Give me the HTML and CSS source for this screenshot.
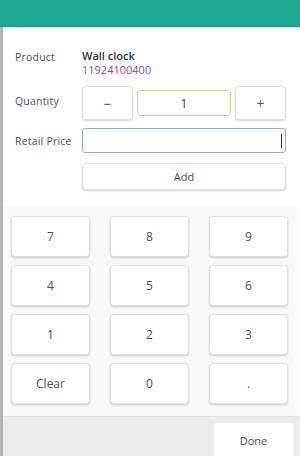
FILE: index.html
```html
<!DOCTYPE html>
<html>
<head>
<meta charset="utf-8">
<link rel="stylesheet" href="styles.css">
</head>
<body>
<div class="app">
  <header class="topbar"></header>
  <main class="main">
    <section class="form">
      <div class="row row-product">
        <div class="label">Product</div>
        <div class="value">
          <div class="name">Wall clock</div>
          <div class="code">11924100400</div>
        </div>
      </div>
      <div class="row row-qty">
        <div class="label label-qty">Quantity</div>
        <div class="qty">
          <button class="btn qbtn">&minus;</button>
          <div class="qinput">1</div>
          <button class="btn qbtn">+</button>
        </div>
      </div>
      <div class="row row-price">
        <div class="label">Retail Price</div>
        <div class="pinput"><span class="caret"></span></div>
      </div>
      <div class="row row-add">
        <div class="label"></div>
        <button class="btn addbtn">Add</button>
      </div>
    </section>
    <section class="keypad">
      <button class="btn key">7</button>
      <button class="btn key">8</button>
      <button class="btn key">9</button>
      <button class="btn key">4</button>
      <button class="btn key">5</button>
      <button class="btn key">6</button>
      <button class="btn key">1</button>
      <button class="btn key">2</button>
      <button class="btn key">3</button>
      <button class="btn key">Clear</button>
      <button class="btn key">0</button>
      <button class="btn key">.</button>
    </section>
    <footer class="footer">
      <button class="btn done">Done</button>
    </footer>
  </main>
</div>
</body>
</html>
```
FILE: styles.css
```css
html, body {
  margin: 0;
  padding: 0;
  background: #ffffff;
}
body {
  font-family: "Open Sans", "Noto Sans", sans-serif;
  color: #3d4450;
  width: 300px;
  height: 456px;
  overflow: hidden;
}
.app {
  display: flex;
  flex-direction: column;
  height: 456px;
}
.topbar {
  height: 26px;
  background: #21a892;
  border-bottom: 1px solid #1d9883;
  flex: none;
}
.main {
  flex: 1;
  display: flex;
  flex-direction: column;
  border-left: 3px solid #b4b4b4;
}
.form {
  padding: 22px 14px 17px 12px;
  display: flex;
  flex-direction: column;
}
.row {
  display: flex;
  align-items: center;
}
.label {
  width: 67px;
  flex: none;
  font-size: 10.5px;
  color: #4a4f57;
  letter-spacing: 0.2px;
}
.label-qty {
  margin-top: -4px;
}
.row-product {
  align-items: flex-start;
}
.row-product .label {
  padding-top: 1px;
}
.value {
  line-height: 14px;
}
.name {
  font-size: 11px;
  font-weight: 600;
  color: #2b3340;
}
.code {
  font-size: 11px;
  color: #9a3fb8;
}
.row-qty {
  margin-top: 9px;
  height: 34px;
}
.qty {
  flex: 1;
  display: flex;
  align-items: center;
  gap: 4px;
}
.btn {
  font-family: inherit;
  background: #ffffff;
  border: 1px solid #e0e0e0;
  border-radius: 4px;
  box-shadow: 0 1px 2px rgba(0, 0, 0, 0.18);
  color: #4a4f57;
  padding: 0;
  margin: 0;
}
.qbtn {
  width: 51px;
  height: 34px;
  font-size: 14px;
}
.qinput {
  flex: 1;
  height: 26px;
  box-sizing: border-box;
  border: 1px solid #c6d88c;
  border-radius: 4px;
  display: flex;
  align-items: center;
  justify-content: center;
  font-size: 12px;
  color: #3d4450;
}
.row-price {
  margin-top: 8px;
}
.pinput {
  flex: 1;
  height: 25px;
  box-sizing: border-box;
  border: 1px solid #8db5c8;
  border-radius: 3px;
  display: flex;
  align-items: center;
  justify-content: flex-end;
  padding-right: 3px;
}
.caret {
  width: 1px;
  height: 14px;
  background: #333;
}
.row-add {
  margin-top: 10px;
}
.addbtn {
  flex: 1;
  height: 27px;
  font-size: 11px;
}
.keypad {
  margin-right: 3px;
  background: #f8f8f8;
  padding: 9px 8px 12px 8px;
  display: grid;
  grid-template-columns: 79px 79px 79px;
  column-gap: 20px;
  row-gap: 8px;
}
.key {
  height: 41px;
  font-size: 12px;
}
.footer {
  flex: 1;
  background: #ebebeb;
  border-top: 1px solid #e2e2e2;
  display: flex;
  justify-content: flex-end;
  align-items: flex-start;
  padding: 5px 6px 0 0;
}
.done {
  width: 81px;
  height: 36px;
  font-size: 11px;
  border-color: #f0f0f0;
  box-shadow: none;
}
```
